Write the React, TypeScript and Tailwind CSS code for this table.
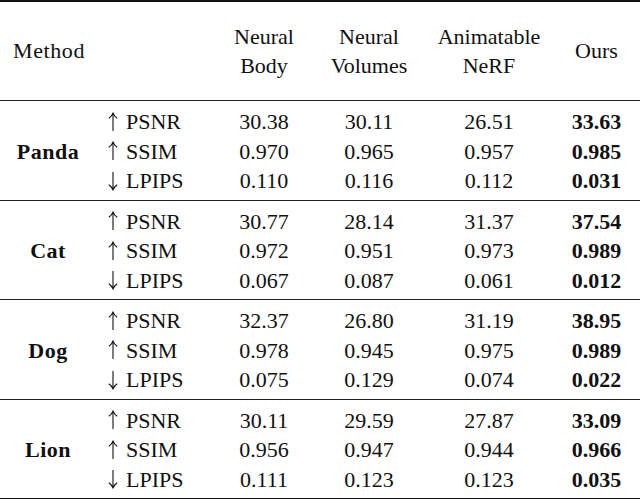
import React from 'react';

type Group = {
  name: string;
  rows: { up: boolean; metric: string; values: string[] }[];
};

const groups: Group[] = [
  {
    name: 'Panda',
    rows: [
      { up: true, metric: 'PSNR', values: ['30.38', '30.11', '26.51', '33.63'] },
      { up: true, metric: 'SSIM', values: ['0.970', '0.965', '0.957', '0.985'] },
      { up: false, metric: 'LPIPS', values: ['0.110', '0.116', '0.112', '0.031'] },
    ],
  },
  {
    name: 'Cat',
    rows: [
      { up: true, metric: 'PSNR', values: ['30.77', '28.14', '31.37', '37.54'] },
      { up: true, metric: 'SSIM', values: ['0.972', '0.951', '0.973', '0.989'] },
      { up: false, metric: 'LPIPS', values: ['0.067', '0.087', '0.061', '0.012'] },
    ],
  },
  {
    name: 'Dog',
    rows: [
      { up: true, metric: 'PSNR', values: ['32.37', '26.80', '31.19', '38.95'] },
      { up: true, metric: 'SSIM', values: ['0.978', '0.945', '0.975', '0.989'] },
      { up: false, metric: 'LPIPS', values: ['0.075', '0.129', '0.074', '0.022'] },
    ],
  },
  {
    name: 'Lion',
    rows: [
      { up: true, metric: 'PSNR', values: ['30.11', '29.59', '27.87', '33.09'] },
      { up: true, metric: 'SSIM', values: ['0.956', '0.947', '0.944', '0.966'] },
      { up: false, metric: 'LPIPS', values: ['0.111', '0.123', '0.123', '0.035'] },
    ],
  },
];

const Arrow: React.FC<{ up: boolean }> = ({ up }) => (
  <svg width="10" height="20" viewBox="0 0 10 20" className={up ? '' : 'rotate-180'}>
    <path d="M5 1.5 V19" stroke="#111" strokeWidth="1.1" fill="none" />
    <path d="M0.8 6.2 Q4 4 5 1.2 Q6 4 9.2 6.2" stroke="#111" strokeWidth="1.1" fill="none" />
  </svg>
);

const cols = 'grid grid-cols-[96px_119px_98px_112px_128px_87px]';

const App: React.FC = () => {
  return (
    <div className="w-[640px] h-[499px] bg-white text-[#111] font-['Liberation_Serif',serif] text-[22px] leading-[29.5px]">
      <div className="border-t-2 border-b-2 border-[#111]">
        {/* header */}
        <div className={`${cols} h-[98px] items-center`}>
          <div className="col-span-2 pl-[13px] tracking-[0.6px]">Method</div>
          <div className="text-center">Neural<br />Body</div>
          <div className="text-center">Neural<br />Volumes</div>
          <div className="text-center">Animatable<br />NeRF</div>
          <div className="text-center">Ours</div>
        </div>

        {groups.map((g) => (
          <div key={g.name} className={`${cols} border-t-[1.5px] border-[#222] pt-[6px] pb-[4px]`}>
            <div className="row-span-3 flex items-center justify-center font-bold tracking-[0.5px]">{g.name}</div>
            {g.rows.map((r) => (
              <React.Fragment key={r.metric}>
                <div className="pl-[12px] flex items-center gap-[8px]">
                  <Arrow up={r.up} />
                  <span>{r.metric}</span>
                </div>
                {r.values.map((v, i) => (
                  <div key={i} className={`text-center ${i === 3 ? 'font-bold' : ''}`}>{v}</div>
                ))}
              </React.Fragment>
            ))}
          </div>
        ))}
      </div>
    </div>
  );
};

export default App;
